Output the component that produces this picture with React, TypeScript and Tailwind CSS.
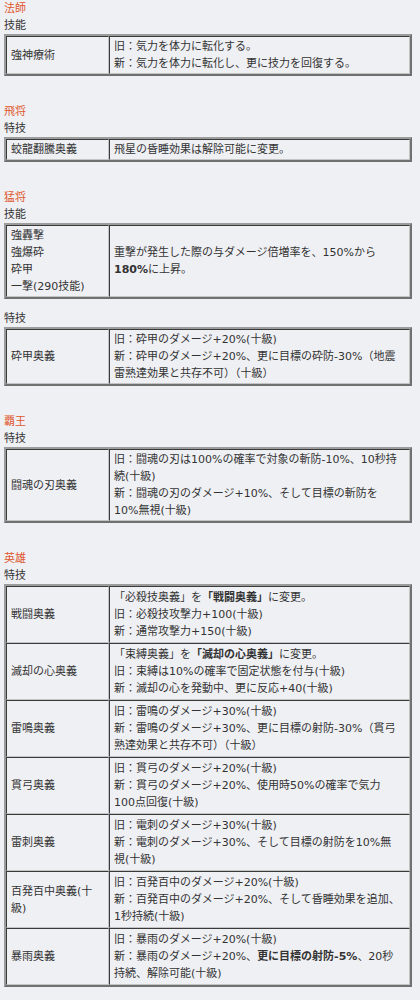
import React from 'react';

type Row = { name: React.ReactNode[]; desc: React.ReactNode[] };
type Group = { label: string; rows: Row[]; gapTop?: boolean };
type Section = { title: string; groups: Group[] };

const sections: Section[] = [
  {
    title: '法師',
    groups: [
      {
        label: '技能',
        rows: [
          {
            name: ['強神療術'],
            desc: ['旧：気力を体力に転化する。', '新：気力を体力に転化し、更に技力を回復する。'],
          },
        ],
      },
    ],
  },
  {
    title: '飛将',
    groups: [
      {
        label: '特技',
        rows: [{ name: ['蛟龍翻騰奥義'], desc: ['飛星の昏睡効果は解除可能に変更。'] }],
      },
    ],
  },
  {
    title: '猛将',
    groups: [
      {
        label: '技能',
        rows: [
          {
            name: ['強轟撃', '強爆砕', '砕甲', '一撃(290技能)'],
            desc: [
              '重撃が発生した際の与ダメージ倍増率を、150%から',
              <><b>180%</b>に上昇。</>,
            ],
          },
        ],
      },
      {
        label: '特技',
        gapTop: true,
        rows: [
          {
            name: ['砕甲奥義'],
            desc: [
              '旧：砕甲のダメージ+20%(十級)',
              '新：砕甲のダメージ+20%、更に目標の砕防-30%（地震',
              '雷熟達効果と共存不可）（十級）',
            ],
          },
        ],
      },
    ],
  },
  {
    title: '覇王',
    groups: [
      {
        label: '特技',
        rows: [
          {
            name: ['闘魂の刃奥義'],
            desc: [
              '旧：闘魂の刃は100%の確率で対象の斬防-10%、10秒持',
              '続(十級)',
              '新：闘魂の刃のダメージ+10%、そして目標の斬防を',
              '10%無視(十級)',
            ],
          },
        ],
      },
    ],
  },
  {
    title: '英雄',
    groups: [
      {
        label: '特技',
        rows: [
          {
            name: ['戦闘奥義'],
            desc: [
              <>「必殺技奥義」を<b>「戦闘奥義」</b>に変更。</>,
              '旧：必殺技攻撃力+100(十級)',
              '新：通常攻撃力+150(十級)',
            ],
          },
          {
            name: ['滅却の心奥義'],
            desc: [
              <>「束縛奥義」を<b>「滅却の心奥義」</b>に変更。</>,
              '旧：束縛は10%の確率で固定状態を付与(十級)',
              '新：滅却の心を発動中、更に反応+40(十級)',
            ],
          },
          {
            name: ['雷鳴奥義'],
            desc: [
              '旧：雷鳴のダメージ+30%(十級)',
              '新：雷鳴のダメージ+30%、更に目標の射防-30%（貫弓',
              '熟達効果と共存不可）（十級）',
            ],
          },
          {
            name: ['貫弓奥義'],
            desc: [
              '旧：貫弓のダメージ+20%(十級)',
              '新：貫弓のダメージ+20%、使用時50%の確率で気力',
              '100点回復(十級)',
            ],
          },
          {
            name: ['雷刺奥義'],
            desc: [
              '旧：電刺のダメージ+30%(十級)',
              '新：電刺のダメージ+30%、そして目標の射防を10%無',
              '視(十級)',
            ],
          },
          {
            name: ['百発百中奥義(十', '級)'],
            desc: [
              '旧：百発百中のダメージ+20%(十級)',
              '新：百発百中のダメージ+20%、そして昏睡効果を追加、',
              '1秒持続(十級)',
            ],
          },
          {
            name: ['暴雨奥義'],
            desc: [
              '旧：暴雨のダメージ+20%(十級)',
              <>新：暴雨のダメージ+20%、<b>更に目標の射防-5%</b>、20秒</>,
              '持続、解除可能(十級)',
            ],
          },
        ],
      },
    ],
  },
];

const cellCls =
  'border border-t-[#3a3a3a] border-l-[#3a3a3a] border-b-[#c4c4c4] border-r-[#c4c4c4] px-1 align-middle text-left font-normal';

function Lines({ items }: { items: React.ReactNode[] }) {
  return (
    <>
      {items.map((line, i) => (
        <div key={i} className="whitespace-nowrap">
          {line}
        </div>
      ))}
    </>
  );
}

function SkillTable({ rows }: { rows: Row[] }) {
  const multi = rows.length > 1;
  return (
    <table className="table-fixed w-[408px] border-separate border-spacing-0 border-2 border-t-[#9c9c9c] border-l-[#9c9c9c] border-b-[#707070] border-r-[#707070]">
      <colgroup>
        <col className="w-[103px]" />
        <col />
      </colgroup>
      <tbody>
        {rows.map((row, i) => (
          <tr key={i}>
            <td className={`${cellCls} ${multi ? 'py-[2px]' : 'py-px'}`}>
              <Lines items={row.name} />
            </td>
            <td className={`${cellCls} ${multi ? 'py-[2px]' : 'py-px'}`}>
              <Lines items={row.desc} />
            </td>
          </tr>
        ))}
      </tbody>
    </table>
  );
}

export default function App() {
  return (
    <div
      className="min-h-[1000px] bg-[#eff0f4] px-1 text-[11px] leading-[17px] text-[#333333]"
      style={{ fontFamily: '"DejaVu Sans", "Noto Sans CJK JP", sans-serif' }}
    >
      {sections.map((section, si) => (
        <div key={section.title} className={si > 0 ? 'mt-[27px]' : ''}>
          <div className="text-[#e0572c]">{section.title}</div>
          {section.groups.map((group, gi) => (
            <div key={gi} className={group.gapTop ? 'mt-[11px]' : ''}>
              <div>{group.label}</div>
              <SkillTable rows={group.rows} />
            </div>
          ))}
        </div>
      ))}
    </div>
  );
}
